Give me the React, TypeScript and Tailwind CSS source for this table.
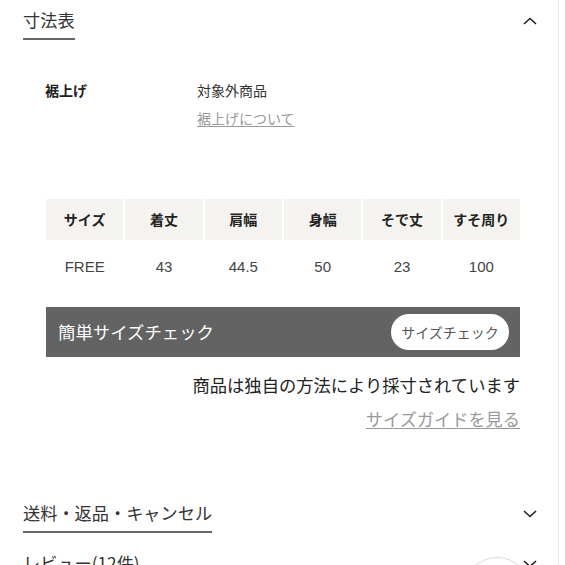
import { ReactNode } from "react";

const font = {
  fontFamily: '"Noto Sans CJK JP", "Noto Sans", "Liberation Sans", sans-serif',
};

const Chevron = ({ up }: { up?: boolean }) => (
  <svg width="14" height="8" viewBox="0 0 14 8" className="block">
    <path
      d={up ? "M1 7 L7 1.5 L13 7" : "M1 1 L7 6.5 L13 1"}
      fill="none"
      stroke="#222"
      strokeWidth="1.6"
    />
  </svg>
);

const SectionHead = ({ title, up, children }: { title: string; up?: boolean; children?: ReactNode }) => (
  <div className="flex items-start justify-between pr-[21px]">
    <h2 className="inline-block border-b-2 border-[#666] pb-[5px] text-[17.2px] leading-[26px] text-[#333]">
      {title}
    </h2>
    <div className="mt-[10px]">
      <Chevron up={up} />
    </div>
    {children}
  </div>
);

const headers = ["サイズ", "着丈", "肩幅", "身幅", "そで丈", "すそ周り"];
const values = ["FREE", "43", "44.5", "50", "23", "100"];

export default function App() {
  return (
    <div className="relative h-[565px] w-[565px] overflow-hidden bg-white" style={font}>
      <div className="h-full w-[559px] border-r border-[#ececec] pl-[23px]">
        <div className="pt-[7px]">
          <SectionHead title="寸法表" up />
        </div>

        <div className="ml-[22px] mt-[36px] flex text-[14px] leading-[28px] text-[#333]">
          <div className="w-[152px] font-bold text-[#222]">裾上げ</div>
          <div>
            <div>対象外商品</div>
            <a className="text-[#999] underline underline-offset-2">裾上げについて</a>
          </div>
        </div>

        <div className="ml-[23px] mt-[67px] w-[474px]">
          <div className="grid grid-cols-6 gap-x-[2px]">
            {headers.map((h) => (
              <div
                key={h}
                className="flex h-[41px] items-center justify-center bg-[#f4f3ef] text-[14px] font-bold text-[#222]"
              >
                {h}
              </div>
            ))}
          </div>
          <div className="grid grid-cols-6 gap-x-[2px]">
            {values.map((v, i) => (
              <div
                key={i}
                className="flex h-[54px] items-center justify-center text-[15px] text-[#444]"
                style={{ fontFamily: '"Liberation Sans", "Noto Sans CJK JP", sans-serif' }}
              >
                {v}
              </div>
            ))}
          </div>

          <div className="mt-[13px] flex h-[50px] items-center justify-between bg-[#636363] pl-[12px] pr-[11px]">
            <span className="text-[17.4px] text-white">簡単サイズチェック</span>
            <button className="h-[36px] w-[118px] rounded-full bg-white text-[14px] text-[#555]">
              サイズチェック
            </button>
          </div>

          <p className="mt-[15px] text-right text-[17.3px] leading-[26px] text-[#222]">
            商品は独自の方法により採寸されています
          </p>
          <p className="mt-[8px] text-right text-[17.2px] leading-[26px]">
            <a className="text-[#999] underline underline-offset-2">サイズガイドを見る</a>
          </p>
        </div>

        <div className="mt-[68px]">
          <SectionHead title="送料・返品・キャンセル" />
        </div>

        <div className="mt-[17px] flex items-start justify-between pr-[21px]">
          <span className="text-[17.2px] leading-[26px] text-[#333]">レビュー(12件)</span>
          <div className="mt-[10px]">
            <Chevron />
          </div>
        </div>
      </div>

      <div className="absolute left-[464px] top-[557px] h-[66px] w-[66px] rounded-full border border-[#dcdcdc] bg-white/60" />
    </div>
  );
}
